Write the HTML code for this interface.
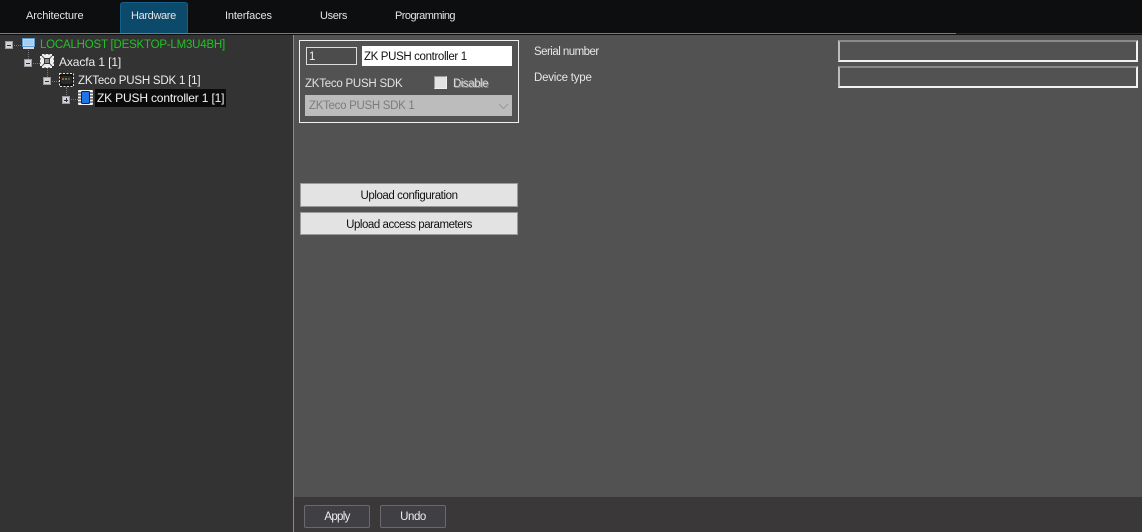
<!DOCTYPE html>
<html><head><meta charset="utf-8">
<style>
html,body{margin:0;padding:0;background:#525252}
#r{position:relative;width:1142px;height:532px;overflow:hidden;background:#525252;font-family:"Liberation Sans",sans-serif;font-size:11.5px;color:#e8e8e8}
#r div,#r svg{position:absolute}
.t{white-space:nowrap;line-height:14px}
.tab{top:8px;color:#e4e4e4;font-size:11px}
.exp{width:8px;height:8px;background:#d2d2d8;box-shadow:inset 0 0 0 1px #9a9aa0}
.exp i{position:absolute;left:2px;top:3.5px;width:4px;height:1px;background:#2a2a38}
.dot{border-left:1px dotted #777}
.doth{border-top:1px dotted #777}
.btn{background:#e3e3e3;border:1px solid #9a9a9a;box-sizing:border-box;color:#111;text-align:center;line-height:24px;height:24px;left:300px;width:218px}
.bb{top:505px;height:23px;box-sizing:border-box;border:1px solid #6a6a6e;border-radius:2px;background:#3f3f44;color:#eee;text-align:center;line-height:22px}
.inp{box-sizing:border-box;border:2px solid;border-color:#8a8a8a #f2f2f2 #f2f2f2 #bdbdbd;background:#525252;left:838px;width:300px;height:22px}
</style></head><body>
<div id="r">
<div style="left:0;top:0;width:1142px;height:33px;background:#0d0e10"></div>
<div style="left:0;top:33px;width:956px;height:1px;background:#7a7a7a"></div>
<div style="left:956px;top:33px;width:186px;height:1px;background:#2a2a2a"></div>
<div style="left:0;top:34px;width:1142px;height:1px;background:#0d0e10"></div>

<div style="left:120px;top:2px;width:68px;height:31px;box-sizing:border-box;background:#0c4a6c;border:1px solid #15608a;border-bottom:none;border-radius:3px 3px 0 0"></div>
<div class="t tab" style="left:26px;top:9px;letter-spacing:-.1px">Architecture</div>
<div class="t tab" style="left:131px;top:9px;letter-spacing:-.35px">Hardware</div>
<div class="t tab" style="left:225px;top:9px;letter-spacing:-.15px">Interfaces</div>
<div class="t tab" style="left:320px;top:9px;letter-spacing:-.35px">Users</div>
<div class="t tab" style="left:395px;top:9px;letter-spacing:-.55px">Programming</div>

<div style="left:0;top:35px;width:293px;height:497px;background:#333333"></div>
<div style="left:293px;top:35px;width:1px;height:497px;background:#8a8a8a"></div>

<div style="left:294px;top:497px;width:848px;height:35px;background:#3a3839"></div>

<!-- tree lines -->
<div class="dot" style="left:28px;top:50px;height:9px"></div>
<div class="dot" style="left:47px;top:68px;height:9px"></div>
<div class="dot" style="left:66px;top:87px;height:8px"></div>
<div class="doth" style="left:14px;top:45px;width:7px"></div>
<div class="doth" style="left:33px;top:63px;width:7px"></div>
<div class="doth" style="left:52px;top:81px;width:7px"></div>
<div class="doth" style="left:71px;top:99px;width:7px"></div>

<div class="exp" style="left:5px;top:41px"><i></i></div>
<div class="exp" style="left:24px;top:59px"><i></i></div>
<div class="exp" style="left:43px;top:77px"><i></i></div>
<div class="exp" style="left:62px;top:96px"><i></i><i style="left:3.5px;top:2px;width:1px;height:4px"></i></div>

<!-- icons -->
<svg style="left:22px;top:38px" width="13" height="11" viewBox="0 0 13 11"><rect x="0.500" y="0.500" width="12" height="8" fill="#bcd9f2" stroke="#5f9ad2"/><rect x="2" y="2" width="9" height="5" fill="#a8cdee"/><rect x="1" y="9" width="11" height="2" fill="#d4d8de"/></svg>
<svg style="left:40px;top:54px" width="14" height="14" viewBox="0 0 14 14"><rect width="14" height="14" fill="#f0f0f0"/><path d="M0 0h2v2h-2zM12 0h2v2h-2zM0 12h2v2h-2zM12 12h2v2h-2z" fill="#333"/><path d="M2 2l10 10M12 2l-10 10" stroke="#555" stroke-width="1"/><rect x="4.500" y="4.500" width="5" height="5" fill="#8a8a8a" stroke="#333"/><path d="M5 0v1M9 0v1M5 13v1M9 13v1M0 5h1M0 9h1M13 5h1M13 9h1" stroke="#444"/></svg>
<svg style="left:59px;top:73px" width="15" height="14" viewBox="0 0 15 14"><rect x="0.500" y="0.500" width="14" height="13" fill="#141414" stroke="#e4e4e4" stroke-dasharray="2 1.500"/><rect x="2" y="3" width="11" height="8" rx="2" fill="#2a2a2a"/><rect x="3" y="5" width="2" height="2" fill="#b0572e"/><rect x="6" y="5" width="2" height="2" fill="#6b7d3a"/><rect x="9" y="5" width="2" height="2" fill="#555"/></svg>
<svg style="left:78px;top:90px" width="15" height="15" viewBox="0 0 15 15"><rect width="15" height="15" rx="1" fill="#f2f2f2"/><path d="M0 3h3M0 6h3M0 9h3M0 12h3M12 3h3M12 6h3M12 9h3M12 12h3" stroke="#222"/><rect x="3.500" y="1.500" width="8" height="12" rx="1" fill="#1f74e6" stroke="#123"/></svg>

<div class="t" style="left:40px;top:38px;color:#22c322;letter-spacing:-.21px">LOCALHOST [DESKTOP-LM3U4BH]</div>
<div class="t" style="left:59px;top:55px;color:#ececec;font-size:12px;letter-spacing:-.1px">Axacfa 1 [1]</div>
<div class="t" style="left:78px;top:74px;color:#ececec;letter-spacing:-.2px">ZKTeco PUSH SDK 1 [1]</div>
<div style="left:95px;top:89px;width:131px;height:18px;background:#0b0b0b"></div>
<div class="t" style="left:97px;top:91px;color:#f4f4f4;font-size:12px;letter-spacing:-.17px">ZK PUSH controller 1 [1]</div>

<!-- group -->
<div style="left:299px;top:40px;width:220px;height:83px;box-sizing:border-box;border:1px solid #f0f0f0"></div>
<div style="left:306px;top:47px;width:51px;height:18px;box-sizing:border-box;border:1px solid #ddd;background:#4c4c4c"></div>
<div class="t" style="left:309px;top:50px;color:#eee">1</div>
<div style="left:362px;top:46px;width:150px;height:20px;background:#fff"></div>
<div class="t" style="left:364px;top:50px;color:#111;letter-spacing:-.36px">ZK PUSH controller 1</div>
<div class="t" style="left:305px;top:77px;color:#e2e2e2;letter-spacing:-.24px">ZKTeco PUSH SDK</div>
<div style="left:434px;top:76px;width:13px;height:13px;box-sizing:border-box;border:1px solid #9a9a9a;border-right-color:#eee;border-bottom-color:#eee;background:#e2e2e2"></div>
<div class="t" style="left:453px;top:77px;color:#d8d8d8;letter-spacing:-.47px;text-shadow:1px 1px 0 #888">Disable</div>
<div style="left:305px;top:95px;width:207px;height:21px;background:#bcbcbc"></div>
<div class="t" style="left:309px;top:99px;color:#7c7c7c;letter-spacing:-.3px">ZKTeco PUSH SDK 1</div>
<svg style="left:498px;top:103px" width="11" height="7" viewBox="0 0 11 7"><path d="M1 1l4.500 4.500L10 1" fill="none" stroke="#9a9a9a"/></svg>

<div class="t" style="left:534px;top:45px;color:#e6e6e6;letter-spacing:-.53px">Serial number</div>
<div class="t" style="left:534px;top:71px;color:#e6e6e6;letter-spacing:-.22px">Device type</div>
<div class="inp" style="top:40px"></div>
<div class="inp" style="top:66px"></div>

<div class="btn" style="top:183px;letter-spacing:-.42px">Upload configuration</div>
<div class="btn" style="top:212px;height:23px;line-height:24px;letter-spacing:-.46px">Upload access parameters</div>

<div class="bb" style="left:304px;width:66px;letter-spacing:-.7px">Apply</div>
<div class="bb" style="left:380px;width:66px;letter-spacing:-.45px">Undo</div>
</div>
</body></html>
